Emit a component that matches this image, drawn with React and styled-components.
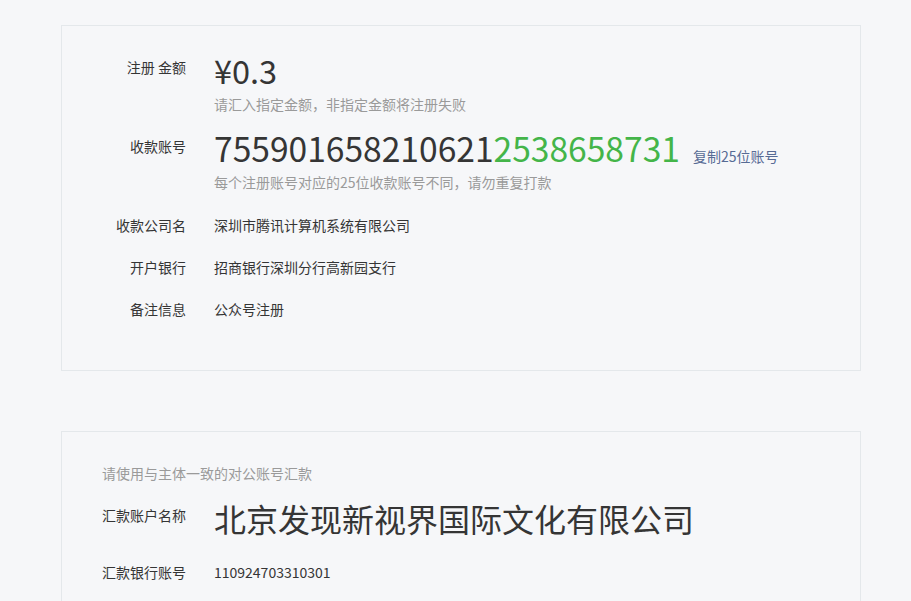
import React from "react";
import styled, { createGlobalStyle } from "styled-components";

const Global = createGlobalStyle`
  html, body { margin: 0; padding: 0; background: #f6f7f9; }
  body {
    font-family: "Noto Sans CJK SC", "Noto Sans", sans-serif;
    color: #353535;
    font-size: 14px;
  }
`;

const Page = styled.div`
  padding: 25px 0 0 61px;
  width: 800px;
  display: flex;
  flex-direction: column;
  gap: 60px;
`;

const Card = styled.section`
  border: 1px solid #e4e8eb;
  background: #f6f7f9;
  padding: ${(p) => p.$padding};
`;

const Row = styled.div`
  display: grid;
  grid-template-columns: ${(p) => p.$labelWidth || "124px"} 1fr;
  column-gap: ${(p) => p.$colGap || "28px"};
  margin-top: ${(p) => p.$mt || "0px"};
`;

const Label = styled.div`
  text-align: ${(p) => (p.$left ? "left" : "right")};
  font-size: 14px;
  line-height: 20px;
  color: #353535;
  padding-top: ${(p) => p.$pt || "0px"};
  white-space: nowrap;
`;

const Value = styled.div`
  font-size: 14px;
  line-height: 20px;
  color: #353535;
`;

const Big = styled.div`
  font-size: ${(p) => p.$size || "32px"};
  line-height: 40px;
  height: 40px;
  color: #353535;
  white-space: nowrap;
`;

const Green = styled.span`
  color: #44b549;
`;

const CopyLink = styled.a`
  font-size: 14px;
  line-height: 1;
  color: #576b95;
  margin-left: 13px;
  cursor: pointer;
  text-decoration: none;
`;

const Hint = styled.div`
  font-size: 14px;
  line-height: 20px;
  color: #9a9a9a;
  margin-top: ${(p) => p.$mt || "4px"};
`;

export default function App() {
  return (
    <>
      <Global />
      <Page>
        <Card $padding="24px 0 51px 0">
          <Row>
            <Label $pt="7px">注册 金额</Label>
            <div>
              <Big $size="32.5px">¥0.3</Big>
              <Hint>请汇入指定金额，非指定金额将注册失败</Hint>
            </div>
          </Row>
          <Row $mt="14px">
            <Label $pt="8px">收款账号</Label>
            <div>
              <Big $size="33.6px">
                755901658210621<Green>2538658731</Green>
                <CopyLink>复制25位账号</CopyLink>
              </Big>
              <Hint>每个注册账号对应的25位收款账号不同，请勿重复打款</Hint>
            </div>
          </Row>
          <Row $mt="23px">
            <Label>收款公司名</Label>
            <Value>深圳市腾讯计算机系统有限公司</Value>
          </Row>
          <Row $mt="22px">
            <Label>开户银行</Label>
            <Value>招商银行深圳分行高新园支行</Value>
          </Row>
          <Row $mt="22px">
            <Label>备注信息</Label>
            <Value>公众号注册</Value>
          </Row>
        </Card>
        <Card $padding="31px 40px 40px 40px">
          <Hint $mt="0px">请使用与主体一致的对公账号汇款</Hint>
          <Row $mt="15px" $labelWidth="112px" $colGap="0px">
            <Label $left $pt="7px">汇款账户名称</Label>
            <Big $size="32px">北京发现新视界国际文化有限公司</Big>
          </Row>
          <Row $mt="24px" $labelWidth="112px" $colGap="0px">
            <Label $left>汇款银行账号</Label>
            <Value>110924703310301</Value>
          </Row>
        </Card>
      </Page>
    </>
  );
}
